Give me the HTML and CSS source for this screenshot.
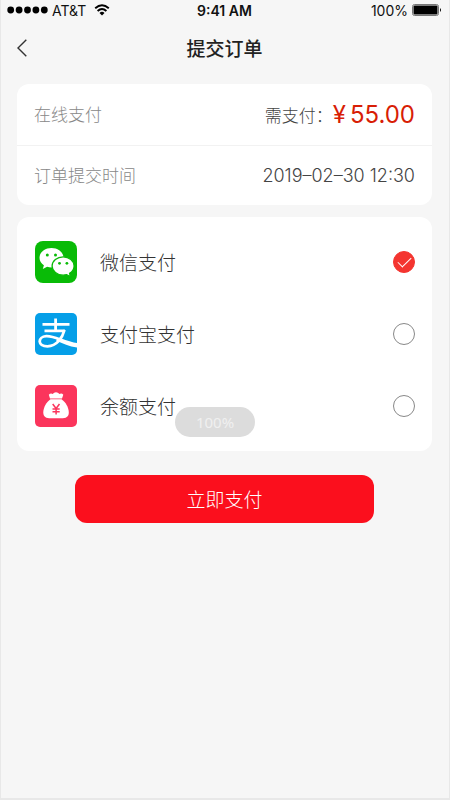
FILE: index.html
```html
<!DOCTYPE html>
<html lang="zh-CN">
<head>
  <meta charset="utf-8">
  <meta name="viewport" content="width=device-width, initial-scale=1">
  <title>提交订单</title>
  <link rel="stylesheet" href="styles.css">
</head>
<body>
  <div class="screen">
    <div class="status">
      <div class="status-left">
        <svg class="dots" viewBox="0 0 41 8" aria-hidden="true"><circle cx="3.7" cy="4" r="3.4"/><circle cx="12.1" cy="4" r="3.4"/><circle cx="20.5" cy="4" r="3.4"/><circle cx="28.9" cy="4" r="3.4"/><circle cx="37.3" cy="4" r="3.4"/></svg>
        <span>AT&amp;T</span>
        <svg class="wifi" viewBox="0 0 16 12" aria-hidden="true"><path d="M1.2 4.2Q8-1.8 14.8 4.2M3.6 7Q8 3 12.4 7" fill="none" stroke="#000" stroke-width="1.9"/><path d="M5.5 8.9Q8 6.7 10.5 8.9L8 11.5Z"/></svg>
      </div>
      <strong class="clock">9:41 AM</strong>
      <div class="status-right">
        <span>100%</span>
        <svg class="battery" viewBox="0 0 30 12" aria-hidden="true"><rect x=".5" y=".5" width="26" height="11" rx="2" fill="none" stroke="#777"/><rect x="1.5" y="1.5" width="24" height="9" rx="1"/><path d="M28 4Q30 6 28 8Z"/></svg>
      </div>
    </div>

    <header class="nav">
      <button class="back" type="button" aria-label="返回">
        <svg viewBox="0 0 10 18" aria-hidden="true"><path d="M9.3.8L1 9l8.3 8.2" fill="none" stroke="#333" stroke-width="1.4"/></svg>
      </button>
      <h1>提交订单</h1>
    </header>

    <main>
      <dl class="card summary">
        <div class="row">
          <dt>在线支付</dt>
          <dd>需支付：<span class="amount"><span>¥</span><span>55.00</span></span></dd>
        </div>
        <div class="row">
          <dt>订单提交时间</dt>
          <dd class="time">2019–02–30 12:30</dd>
        </div>
      </dl>

      <form>
        <div class="card methods">
          <label class="method">
            <svg class="logo" viewBox="0 0 42 42" aria-hidden="true">
              <rect width="42" height="42" rx="8" fill="#09bb07"/>
              <path d="M16.500 7C9.800 7 4.500 11.400 4.500 16.800c0 3.100 1.700 5.700 4.400 7.500L7.800 28l4.300-2.300c1.400.4 2.800.7 4.400.7 6.700 0 12-4.300 12-9.600S23.200 7 16.500 7Z" fill="#fff"/>
              <path d="M28.200 15.800c-6.100 0-11.100 4.100-11.100 9.200s5 9.200 11.100 9.200c1.200 0 2.400-.2 3.500-.5l3.800 2.100-.9-3.400c2.700-1.700 4.500-4.400 4.500-7.400 0-5.100-4.900-9.200-10.900-9.200Z" fill="#fff" stroke="#09bb07" stroke-width="1.300"/>
              <g fill="#09bb07"><circle cx="12.300" cy="14" r="1.500"/><circle cx="20.500" cy="14" r="1.500"/><circle cx="24.500" cy="22.300" r="1.400"/><circle cx="31.900" cy="22.300" r="1.400"/></g>
            </svg>
            <span class="name">微信支付</span>
            <input type="radio" name="method" value="wechat" checked>
          </label>
          <label class="method">
            <svg class="logo" viewBox="0 0 42 42" aria-hidden="true">
              <rect width="42" height="42" rx="5" fill="#059fe8"/>
              <g fill="none" stroke="#fff">
                <path d="M20.600 5.500V17M7.500 11.300H34.500M9.500 17.800H30" stroke-width="2.800"/>
                <path d="M29.500 17C27.500 24.500 22 33 12.500 33.300C2 33.300 2.700 23.800 11.200 23.200C20 22.600 28 29.500 42 31.500" stroke-width="2.800"/>
              </g>
              <path d="M23 25C29 28 35 30 42 30.300V34.500C34 33.500 28 30.500 21 27.500Z" fill="#fff"/>
            </svg>
            <span class="name">支付宝支付</span>
            <input type="radio" name="method" value="alipay">
          </label>
          <label class="method">
            <svg class="logo" viewBox="0 0 42 42" aria-hidden="true">
              <rect width="42" height="42" rx="5" fill="#fb355c"/>
              <path d="M15 13.500L13.800 9.800Q15.500 7.800 17.700 8.900Q19 7.200 21 7.200T24.500 8.900Q26.800 7.800 28.300 9.800L27 13.500Z" fill="#fff"/>
              <path d="M15.500 14.300H26.500C30.500 17 33.800 22.500 33.800 27.500C33.800 32 31 33.300 26 33.300H16C11 33.300 8.300 32 8.300 27.500C8.300 22.500 11.500 17 15.500 14.300Z" fill="#fff"/>
              <path d="M17.700 19l3.400 4.500 3.400-4.500M21.100 23.500V29.500M17.500 24.100H24.700M17.500 26.800H24.700" fill="none" stroke="#fb355c" stroke-width="1.500"/>
            </svg>
            <span class="name">余额支付</span>
            <input type="radio" name="method" value="balance">
          </label>
        </div>
        <button class="pay" type="submit">立即支付</button>
      </form>
    </main>

    <div class="toast" role="status">100%</div>
  </div>
</body>
</html>
```

FILE: styles.css
```css
* {
  box-sizing: border-box;
}

body {
  margin: 0;
  font-family: Inter, "Noto Sans CJK SC", sans-serif;
  font-size: 17px;
  font-weight: 300;
  color: #333;
}

button {
  border: 0;
  padding: 0;
  font: inherit;
  cursor: pointer;
}

.screen {
  position: relative;
  min-height: 100vh;
  padding: 0 17px 0 16px;
  background: #f6f6f6;
  border: solid #e8e8e8;
  border-width: 0 1px 2px;
}

.status {
  display: grid;
  grid-template-columns: 1fr auto 1fr;
  align-items: center;
  height: 20px;
  margin: 0 -10px;
  font-size: 14px;
  font-weight: 400;
  color: #111;
}

.status-left,
.status-right {
  display: flex;
  align-items: center;
  gap: 4px;
}

.status-right {
  justify-content: flex-end;
}

.clock {
  font-weight: 600;
}

.dots {
  width: 41px;
  height: 8px;
}

.wifi {
  width: 16px;
  height: 12px;
  margin-left: 4px;
}

.battery {
  width: 30px;
  height: 12px;
}

.nav {
  display: grid;
  grid-template-columns: 24px 1fr 24px;
  align-items: center;
  height: 56px;
  margin-bottom: 8px;
}

.back {
  display: flex;
  background: none;
}

.back svg {
  width: 10px;
  height: 18px;
}

h1 {
  margin: 0;
  padding-bottom: 2px;
  font-size: 19px;
  font-weight: 500;
  text-align: center;
  color: #222;
}

.card {
  margin: 0 0 12px;
  background: #fff;
  border-radius: 12px;
}

.row {
  display: flex;
  align-items: center;
  justify-content: space-between;
  height: 59px;
  padding: 0 17px;
}

.row:first-child {
  height: 62px;
  border-bottom: 1px solid #f2f2f2;
}

dt {
  padding-bottom: 2px;
  color: #888;
}

dd {
  display: flex;
  align-items: center;
  margin: 0;
  color: #444;
}

.time {
  font-size: 18px;
}

.amount {
  display: flex;
  gap: 4px;
  font-size: 24px;
  font-weight: 400;
  color: #d81e06;
}

.methods {
  margin-bottom: 24px;
  padding: 9px 17px 9px 18px;
}

.method {
  display: flex;
  align-items: center;
  gap: 23px;
  height: 72px;
  font-size: 19px;
}

.logo {
  width: 42px;
  height: 42px;
}

.name {
  flex: 1;
  padding-bottom: 2px;
}

.method input {
  appearance: none;
  width: 22px;
  height: 22px;
  margin: 0;
  border: 1px solid #888;
  border-radius: 50%;
}

.method input:checked {
  display: grid;
  place-items: center;
  border-color: #f43530;
  background: #f43530;
}

.method input:checked::before {
  content: "";
  width: 12px;
  height: 6px;
  margin-bottom: 4px;
  border: solid #fff;
  border-width: 0 0 1px 1px;
  transform: rotate(-45deg);
}

.pay {
  display: block;
  width: 72%;
  height: 48px;
  margin: 0 auto;
  padding-bottom: 2px;
  border-radius: 12px;
  background: #fb0f1d;
  color: #fff;
  font-size: 19px;
}

.toast {
  position: absolute;
  top: 407px;
  left: calc(50% - 50px);
  width: 80px;
  border-radius: 15px;
  background: #dcdcdc;
  color: #f0f0f0;
  font-family: "Noto Sans", sans-serif;
  font-size: 15px;
  font-weight: 400;
  line-height: 30px;
  text-align: center;
}
```
